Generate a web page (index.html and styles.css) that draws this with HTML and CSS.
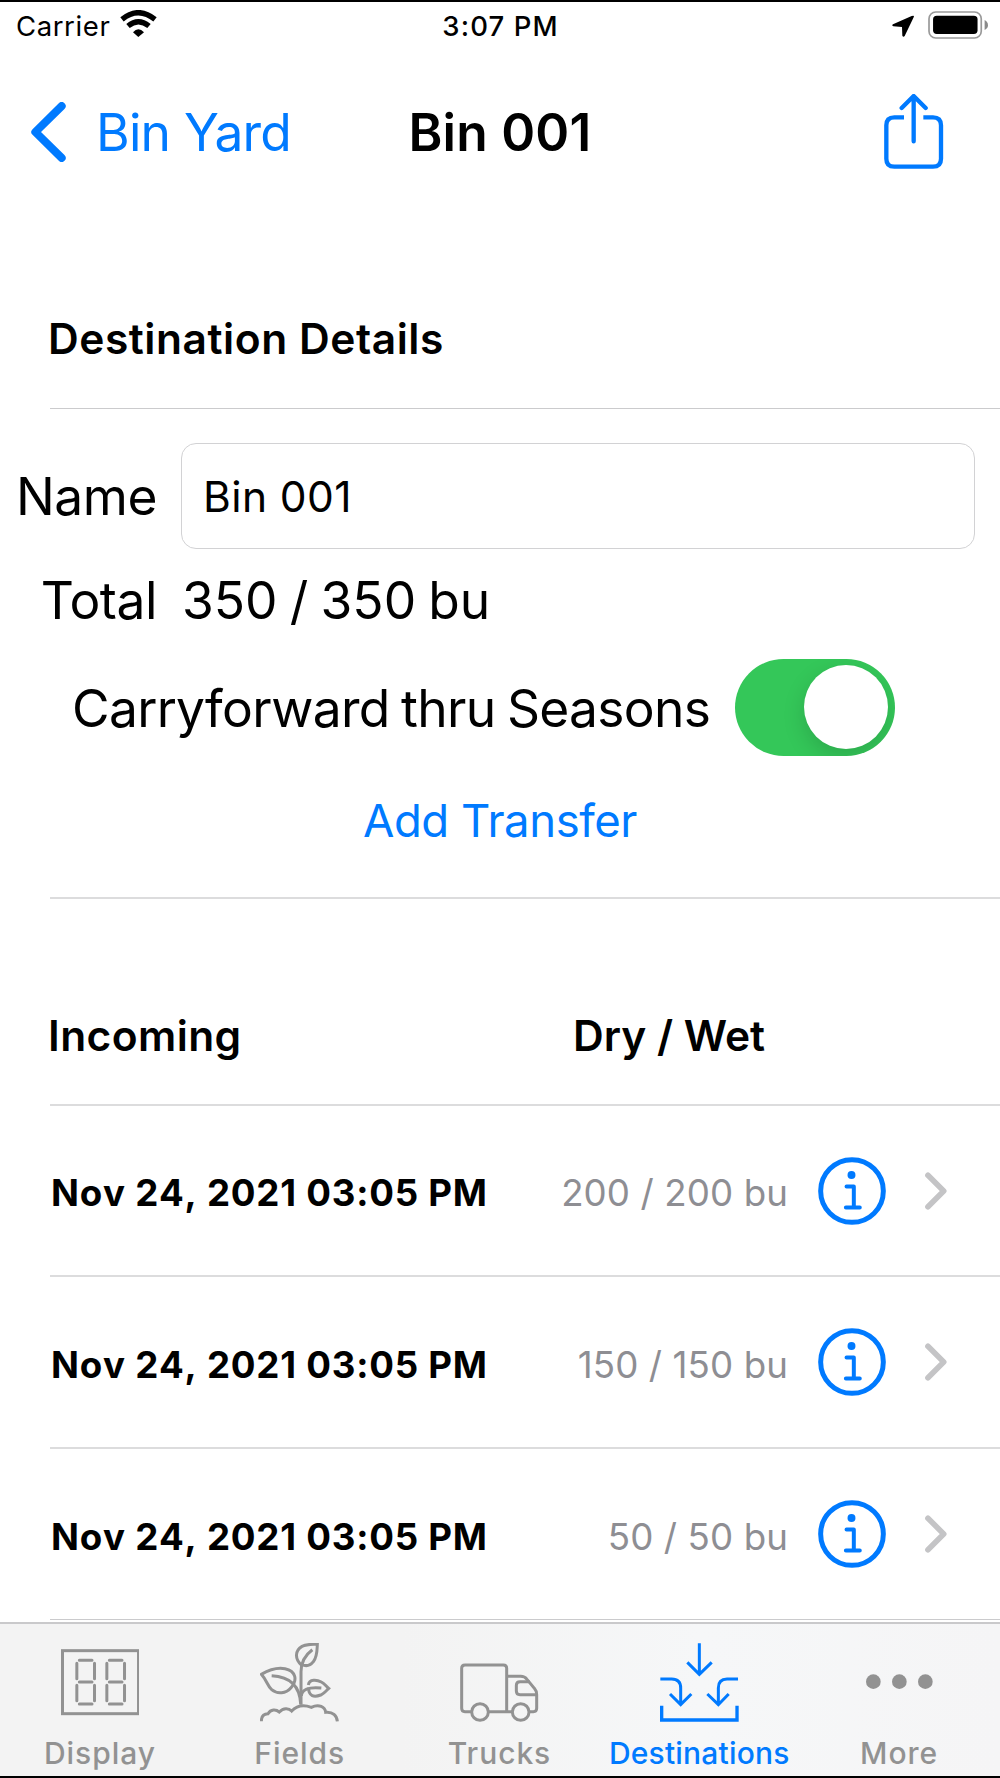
FILE: index.html
```html
<!DOCTYPE html>
<html lang="en">
  <head>
    <meta charset="UTF-8" />
    <meta name="viewport" content="width=device-width, initial-scale=1.0" />
    <title>Bin 001</title>
    <link rel="stylesheet" href="styles.css">
  </head>
  <body>
    <div class="status-bar">
      <div class="status-left">
        <span class="carrier">Carrier</span>
        <svg class="wifi" viewBox="361 30 109 81">
          <path d="M366 58Q415 18 465 58" fill="none" stroke="#000" stroke-width="16"/>
          <path d="M384 78Q415 52 447 78" fill="none" stroke="#000" stroke-width="16"/>
          <path d="M399 97Q415 78 432 97L415 111Z"/>
        </svg>
      </div>
      <span class="time">3:07 PM</span>
      <div class="status-right">
        <svg class="location" viewBox="676 42 66 66">
          <path d="M740 44Q743 44 741 49L714 105Q710 110 707 104L706 78L680 76Q674 73 679 70L735 45Z"/>
        </svg>
        <svg class="battery" viewBox="784 31 178 83">
          <rect x="787" y="34" width="155" height="77" rx="20" fill="none" stroke="#999" stroke-width="5"/>
          <rect x="799" y="45" width="132" height="54" rx="11"/>
          <path d="M952 58Q962 64 962 73Q962 82 952 87Z" fill="#8a8a8a"/>
        </svg>
      </div>
    </div>

    <div class="nav-bar">
      <div class="back">
        <svg class="back-arrow" viewBox="92 308 104 178">
          <path d="M183 320L105 397L183 474" fill="none" stroke="#007aff" stroke-width="24" stroke-linecap="round" stroke-linejoin="round"/>
        </svg>
        <span class="back-text">Bin Yard</span>
      </div>
      <h1>Bin 001</h1>
      <svg class="share" viewBox="652 280 178 228">
        <g fill="none" stroke="#007aff" stroke-width="13">
          <path d="M711 350H682Q658 350 658 374V474Q658 498 682 498H798Q822 498 822 474V374Q822 350 798 350H769"/>
          <path d="M740 288V422M704 322L740 286L776 322" stroke-linecap="round" stroke-linejoin="round"/>
        </g>
      </svg>
    </div>

    <div class="section-head first">
      <h2 class="details-title">Destination Details</h2>
    </div>
    <div class="details">
      <div class="name-row">
        <label class="name-label" for="bin-name">Name</label>
        <input type="text" id="bin-name" class="name-input" value="Bin 001">
      </div>
      <div class="total-row">
        <span class="total-label">Total</span>
        <span class="total-value">350 / 350 bu</span>
      </div>
      <div class="carry-row">
        <span class="carry-label">Carryforward thru Seasons</span>
        <div class="toggle"><div class="knob"></div></div>
      </div>
      <button class="add-btn">Add Transfer</button>
    </div>

    <div class="section-head second">
      <h2 class="incoming">Incoming</h2>
      <h2 class="dry-wet">Dry / Wet</h2>
    </div>
    <div class="rows">
      <div class="row">
        <span class="date">Nov 24, 2021 03:05 PM</span>
        <span class="amount">200 / 200 bu</span>
        <svg class="info" viewBox="953 528 205 205"><use href="#info-icon"/></svg>
        <svg class="chevron" viewBox="1274 574 67 114"><use href="#chevron-icon"/></svg>
      </div>
      <div class="row">
        <span class="date">Nov 24, 2021 03:05 PM</span>
        <span class="amount">150 / 150 bu</span>
        <svg class="info" viewBox="953 528 205 205"><use href="#info-icon"/></svg>
        <svg class="chevron" viewBox="1274 574 67 114"><use href="#chevron-icon"/></svg>
      </div>
      <div class="row">
        <span class="date">Nov 24, 2021 03:05 PM</span>
        <span class="amount">50 / 50 bu</span>
        <svg class="info" viewBox="953 528 205 205"><use href="#info-icon"/></svg>
        <svg class="chevron" viewBox="1274 574 67 114"><use href="#chevron-icon"/></svg>
      </div>
    </div>

    <div class="tab-bar">
      <div class="tab">
        <svg class="tab-icon" viewBox="180 129 236 236">
          <rect x="184.500" y="152" width="228" height="189"/>
          <g id="digit">
            <path d="M235 181H273M235 246H273M235 312H273" stroke-linecap="round"/>
            <path d="M227.500 190V236M280.500 190V236M227.500 256V302M280.500 256V302" stroke-linecap="round"/>
          </g>
          <use href="#digit" x="90"/>
        </svg>
        <span class="tab-display">Display</span>
      </div>
      <div class="tab">
        <svg class="tab-icon" viewBox="780 129 236 236">
          <path d="M903 314V215C903 190 914 166 937 149"/>
          <path d="M905 196C884 178 884 152 906 139C919 132 935 133 952 132C951 151 952 171 940 185C930 198 917 199 905 194"/>
          <path d="M784 223C806 210 830 201 855 206C888 213 893 240 873 263C858 281 832 283 815 269C803 259 802 243 784 223Z"/>
          <path d="M815 227C855 229 899 244 902 312M904 288C905 269 925 260 964 264"/>
          <path d="M925 255C928 236 951 239 964 246C974 251 977 258 986 265C978 273 971 281 962 285C943 292 925 290 926 263"/>
          <path d="M784 364C784 349 792 341 804 341C812 327 828 327 838 336C850 323 866 324 875 333C889 318 907 312 934 322C957 311 975 321 977 337C999 335 1010 347 1012 364"/>
        </svg>
        <span class="tab-fields">Fields</span>
      </div>
      <div class="tab">
        <svg class="tab-icon" viewBox="332 129 236 236">
          <path d="M367 335H347Q337 335 337 325V205Q337 195 347 195H462Q472 195 472 205V335H418M472 229H514Q526 229 533 238L555 265Q562 273 562 284V325Q562 335 552 335H541M488 335H472"/>
          <path d="M541 245H512Q501 245 501 256V273Q501 284 512 284H561"/>
          <circle cx="392" cy="336" r="25"/>
          <circle cx="514" cy="336" r="25"/>
        </svg>
        <span class="tab-trucks">Trucks</span>
      </div>
      <div class="tab active">
        <svg class="tab-icon" viewBox="180 129 236 236">
          <path d="M298 130V224M262 187L298 223L335 187"/>
          <path d="M181 237H215Q242 237 242 264V313M210 282L242 314L274 282"/>
          <path d="M414 237H381Q355 237 355 264V313M322 282L355 314L386 282"/>
          <path d="M185 317V360H411V317" stroke-width="10"/>
        </svg>
        <span class="tab-dest">Destinations</span>
      </div>
      <div class="tab">
        <svg class="tab-icon dots" viewBox="777 129 236 236">
          <circle cx="817" cy="245" r="22"/>
          <circle cx="895" cy="245" r="22"/>
          <circle cx="973" cy="245" r="22"/>
        </svg>
        <span class="tab-more">More</span>
      </div>
    </div>

    <!-- shared row icons -->
    <svg width="0" height="0" class="defs">
      <defs>
        <g id="info-icon" fill="none" stroke="#007aff">
          <circle cx="1055.500" cy="630.500" r="94.500" stroke-width="15"/>
          <circle cx="1054" cy="582" r="12" fill="#007aff" stroke="none"/>
          <path d="M1039 617H1061V679M1037 680H1079" stroke-width="12" stroke-linecap="round" stroke-linejoin="round"/>
        </g>
        <path id="chevron-icon" d="M1283 583L1331 631L1283 679" fill="none" stroke="#c4c4c6" stroke-width="17" stroke-linecap="round" stroke-linejoin="round"/>
      </defs>
    </svg>
  </body>
</html>
```
FILE: styles.css
```css
*{
  box-sizing: border-box;
}
body{
  margin: 0;
  width: 1000px;
  height: 1778px;
  overflow: hidden;
  display: flex;
  flex-direction: column;
  font-family: Inter, "Liberation Sans", sans-serif;
  background-color: white;
  color: black;
  border-top: 2px solid black;
  border-bottom: 2px solid black;
  white-space: nowrap;
}
svg{
  display: block;
  flex: none;
}
h1, h2{
  margin: 0;
  font-weight: 600;
}
.status-bar{
  height: 47px;
  display: grid;
  grid-template-columns: 1fr auto 1fr;
  align-items: center;
  padding: 0 12px 0 16px;
  font-size: 27.5px;
}
.status-left, .status-right{
  display: flex;
  align-items: center;
}
.status-right{
  justify-content: flex-end;
  gap: 14px;
}
.carrier{
  width: 104px;
  letter-spacing: 0.6px;
}
.wifi{
  width: 37px;
  height: 27px;
  margin-top: -5px;
}
.time{
  padding-right: 3px;
  font-weight: 500;
  letter-spacing: 1.1px;
}
.location{
  width: 22px;
  height: 22px;
}
.battery{
  width: 60px;
  height: 28px;
  margin-top: -2px;
}
.nav-bar{
  height: 167px;
  display: grid;
  grid-template-columns: 1fr auto 1fr;
  align-items: center;
  padding: 0 31px 2px;
}
.back{
  display: flex;
  align-items: center;
  gap: 30px;
  color: #007aff;
  font-size: 51.5px;
}
.back-arrow{
  width: 35px;
  height: 60px;
}
.back-text, h1{
  padding-top: 1px;
}
.back-text{
  letter-spacing: -0.8px;
}
h1{
  font-size: 51.5px;
  letter-spacing: 0.2px;
}
.share{
  width: 60px;
  height: 76px;
  justify-self: end;
  margin-right: 25px;
}
.section-head{
  margin-left: 50px;
  display: flex;
  align-items: center;
  border-bottom: 1px solid #cbcbcd;
}
.first{
  height: 193px;
  padding-top: 52px;
}
h2{
  font-size: 42.5px;
}
.details-title, .incoming{
  margin-left: -2px;
}
.details-title{
  letter-spacing: 0.55px;
}
.details{
  height: 490px;
  padding-top: 34px;
}
.details::after{
  content: "";
  display: block;
  height: 2px;
  margin: 18px 0 0 50px;
  background-color: #dcdcdd;
}
.name-row{
  height: 106px;
  display: flex;
  align-items: center;
  padding-right: 25px;
}
.name-label, .total-label{
  width: 157px;
  text-align: right;
  font-size: 51.5px;
  letter-spacing: -0.45px;
}
.name-input{
  flex: 1;
  height: 106px;
  margin-left: 24px;
  padding: 0 0 0 21px;
  border: 1px solid #d2d2d4;
  border-radius: 15px;
  font-family: inherit;
  font-size: 42.5px;
  letter-spacing: 0.4px;
}
.total-row{
  height: 103px;
  display: flex;
  align-items: center;
  padding-bottom: 1px;
  font-size: 51.5px;
}
.total-value{
  margin-left: 25px;
  word-spacing: -2.3px;
}
.carry-row{
  height: 110px;
  display: flex;
  align-items: center;
  padding-left: 72px;
}
.carry-label{
  width: 663px;
  padding-top: 1px;
  font-size: 51.5px;
  letter-spacing: -0.7px;
  word-spacing: -2.3px;
}
.toggle{
  width: 160px;
  height: 97px;
  padding: 6.5px 7px;
  border-radius: 49px;
  background-color: #34c759;
  display: flex;
  justify-content: flex-end;
  overflow: hidden;
}
.knob{
  width: 84px;
  height: 84px;
  border-radius: 50%;
  background-color: white;
  box-shadow: 0 8px 22px rgba(0, 0, 0, 0.15);
}
.add-btn{
  display: block;
  width: 1000px;
  height: 117px;
  padding: 0;
  border: none;
  background: none;
  color: #007aff;
  font-family: inherit;
  font-size: 45.5px;
  letter-spacing: -0.45px;
}
.second{
  height: 207px;
  padding-top: 67px;
  border-bottom: 2px solid #dcdcdd;
}
.incoming{
  width: 525px;
  letter-spacing: 0.4px;
}
.row{
  height: 171px;
  margin-left: 50px;
  display: flex;
  align-items: center;
  border-bottom: 2px solid #dcdcdd;
  font-size: 36.7px;
}
.row:nth-child(2){
  height: 172px;
}
.row:last-child{
  border-bottom: 1px solid #cbcbcd;
}
.date, .amount{
  padding-top: 4px;
}
.date{
  padding-left: 1px;
  font-weight: 700;
  font-kerning: none;
  letter-spacing: 0.75px;
}
.amount{
  flex: 1;
  text-align: right;
  color: #8e8e93;
  letter-spacing: 0.1px;
}
.info{
  width: 68px;
  height: 68px;
  margin-left: 30px;
}
.chevron{
  width: 22px;
  height: 38px;
  margin: 0 53px 0 39px;
}
.tab-bar{
  margin-top: auto;
  height: 154px;
  display: grid;
  grid-template-columns: repeat(5, 1fr);
  padding: 19px 1px 0 0;
  border-top: 2px solid #c9c9cb;
  background: linear-gradient(to right, #f3f3f3, #f3f3f3 40%, #f6f7f8 70%, #f5f5f6);
  color: #929292;
  font-size: 30px;
  font-weight: 500;
}
.tab{
  display: flex;
  flex-direction: column;
  align-items: center;
  line-height: 36px;
  letter-spacing: 0.95px;
}
.tab-icon{
  width: 78.700px;
  height: 78.700px;
  margin-bottom: 13px;
  fill: none;
  stroke: #929292;
  stroke-width: 9;
}
.dots{
  fill: #929292;
  stroke: none;
}
.active{
  color: #007aff;
  letter-spacing: 0.2px;
}
.active .tab-icon{
  stroke: #007aff;
}
.defs{
  position: absolute;
}
```
